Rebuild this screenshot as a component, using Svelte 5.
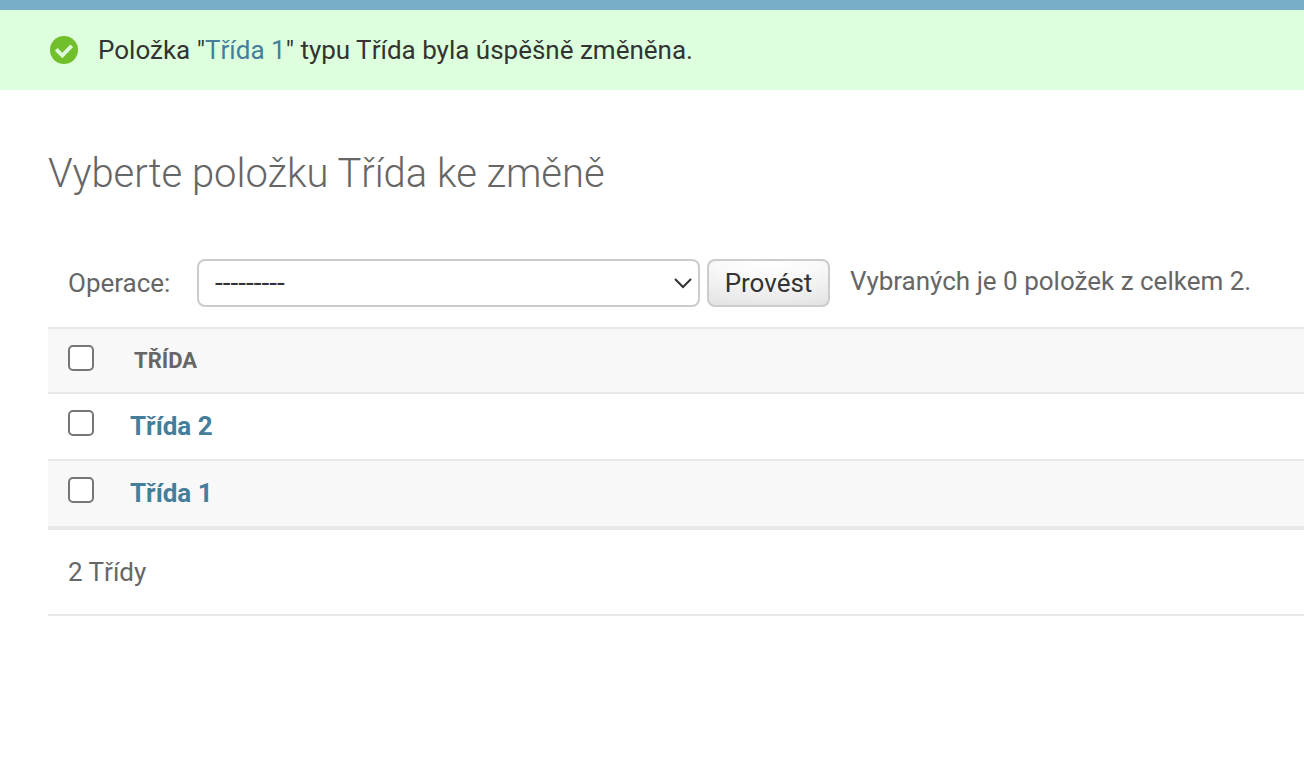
<script>
  const rows = ['Třída 2', 'Třída 1'];
</script>

<div class="top"></div>
<div class="message">
  <svg class="ok" width="28" height="28" viewBox="0 0 28 28"><circle cx="14" cy="14" r="14" fill="#70bf2b"/><path d="M6.2 13.4l6.1 6.1 9.4-9.7" fill="none" stroke="#ddffdd" stroke-width="3.8"/></svg>
  <span>Položka "<a href="#item">Třída 1</a>" typu Třída byla úspěšně změněna.</span>
</div>
<main>
  <h1>Vyberte položku Třída ke změně</h1>
  <div class="actions">
    <span class="label">Operace:</span>
    <div class="select"><span>---------</span><svg width="20" height="12" viewBox="0 0 20 12"><path d="M2 2l8 8 8-8" fill="none" stroke="#333" stroke-width="2"/></svg></div>
    <button>Provést</button>
    <span class="count">Vybraných je 0 položek z celkem 2.</span>
  </div>
  <div class="row head"><i class="box"></i><span>TŘÍDA</span></div>
  {#each rows as row, i}
    <div class="row item" class:alt={i === 1}><i class="box"></i><a href="#item">{row}</a></div>
  {/each}
  <div class="pager">2 Třídy</div>
</main>

<style>
  :global(body) { margin: 0; background: #fff; overflow: hidden; font-family: Roboto, sans-serif; font-size: 26px; color: #666; }
  :global(#app) { height: 767px; overflow: hidden; }
  .top { height: 10px; background: #79aec8; }
  .message { height: 80px; box-sizing: border-box; padding-left: 50px; display: flex; align-items: center; gap: 20px; background: #dfd; color: #333; }
  a { color: #447e9b; text-decoration: none; }
  main { padding-left: 48px; }
  h1 { margin: 59px 0 0; height: 50px; line-height: 50px; font-size: 39.95px; font-weight: 300; }
  .actions { margin-top: 60px; height: 48px; display: flex; padding-left: 20px; white-space: nowrap; line-height: 48px; }
  .label { width: 129px; }
  .select { width: 503px; height: 48px; box-sizing: border-box; border: 2px solid #ccc; border-radius: 8px; display: flex; align-items: center; justify-content: space-between; padding: 0 5px 0 16px; color: #333; line-height: 44px; font-size: 28px; }
  button { margin: 0 0 0 7px; padding: 0; width: 123px; height: 48px; border: 2px solid #ccc; border-radius: 8px; background: radial-gradient(ellipse 120% 120% at 50% 0, #fff, #f9f9f9 35%, #e0e0e0); font: 26px Roboto, sans-serif; color: #333; }
  .count { margin-left: 20px; line-height: 44px; }
  .row { height: 67px; box-sizing: border-box; border-top: 2px solid #e8e8e8; display: flex; align-items: center; padding-left: 20px; font-weight: 700; }
  .item { padding-bottom: 2px; }
  .head { margin-top: 20px; height: 65px; font-size: 22px; background: #f8f8f8; }
  .head span { margin-left: 40px; }
  .alt { background: #f8f8f8; }
  .box { width: 26px; height: 26px; box-sizing: border-box; border: 2px solid #767676; border-radius: 5px; background: #fff; margin-bottom: 6px; }
  .row a { margin-left: 36px; }
  .pager { height: 90px; box-sizing: border-box; border-top: 4px solid #e8e8e8; border-bottom: 2px solid #e8e8e8; padding-left: 20px; line-height: 84px; }
</style>
